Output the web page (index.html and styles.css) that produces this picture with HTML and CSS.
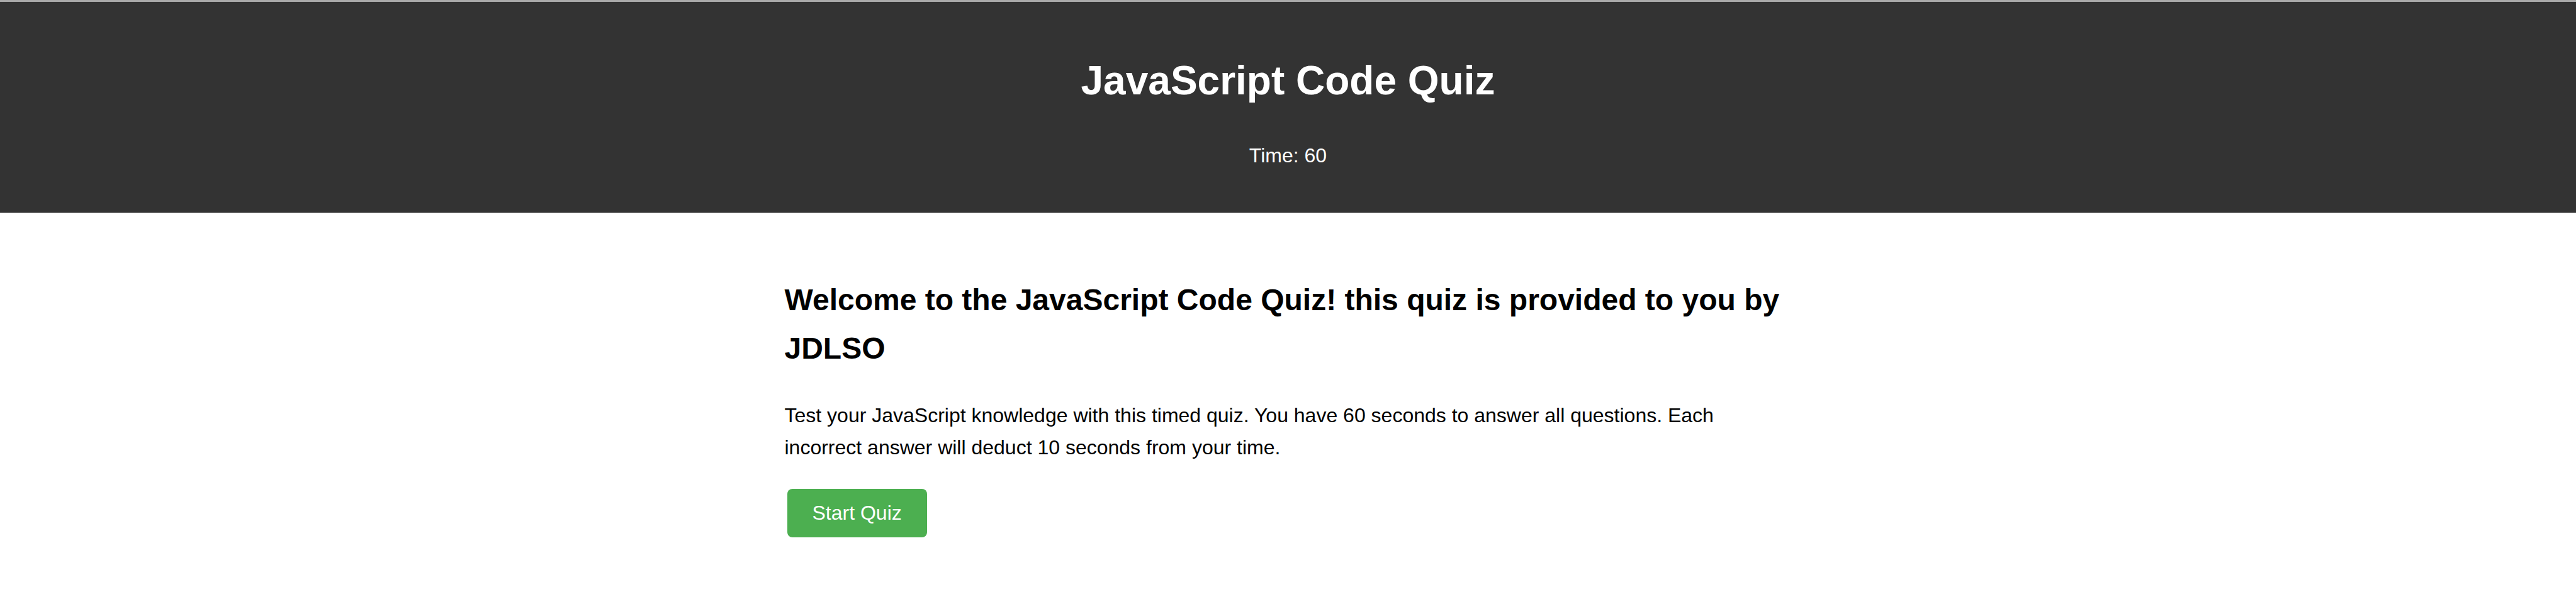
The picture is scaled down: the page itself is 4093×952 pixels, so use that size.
FILE: index.html
```html
<!DOCTYPE html>
<html lang="en">
<head>
<meta charset="utf-8">
<title>JavaScript Code Quiz</title>
<link rel="stylesheet" href="styles.css">
</head>
<body>
<header class="site-header">
  <h1 class="site-title">JavaScript Code Quiz</h1>
  <p class="timer">Time: <span class="timer-value">60</span></p>
</header>
<main class="container">
  <section class="start-screen">
    <h2 class="welcome">Welcome to the JavaScript Code Quiz! this quiz is provided to you by JDLSO</h2>
    <p class="intro">Test your JavaScript knowledge with this timed quiz. You have 60 seconds to answer all questions. Each incorrect answer will deduct 10 seconds from your time.</p>
    <button class="start-btn" type="button">Start Quiz</button>
  </section>
</main>
</body>
</html>
```

FILE: styles.css
```css
html, body {
  margin: 0;
  padding: 0;
  background: #ffffff;
}

body {
  font-family: "Liberation Sans", Arial, sans-serif;
  font-size: 32px;
  line-height: 1.6;
  color: #000000;
}

.site-header {
  background: #333333;
  color: #ffffff;
  text-align: center;
  border-top: 3px solid #aaaaaa;
  padding: 74px 32px 64px;
}

.site-title {
  margin: 0;
  font-size: 64px;
  font-weight: bold;
  line-height: 1.6;
}

.timer {
  margin: 43px 0 0;
  font-size: 32px;
  line-height: 1.6;
}

.container {
  max-width: 1600px;
  margin: 0 auto;
  padding-top: 101.6px;
}

.welcome {
  margin: 0 0 42px;
  font-size: 48px;
  font-weight: bold;
  line-height: 1.6;
}

.intro {
  margin: 0 0 40px;
  font-size: 32px;
  line-height: 1.6;
}

.start-btn {
  margin: 0 0 0 4px;
  padding: 20px 40px;
  border: none;
  border-radius: 8px;
  background: #4caf50;
  color: #ffffff;
  font-family: "Liberation Sans", Arial, sans-serif;
  font-size: 32px;
  line-height: normal;
  cursor: pointer;
}
```
